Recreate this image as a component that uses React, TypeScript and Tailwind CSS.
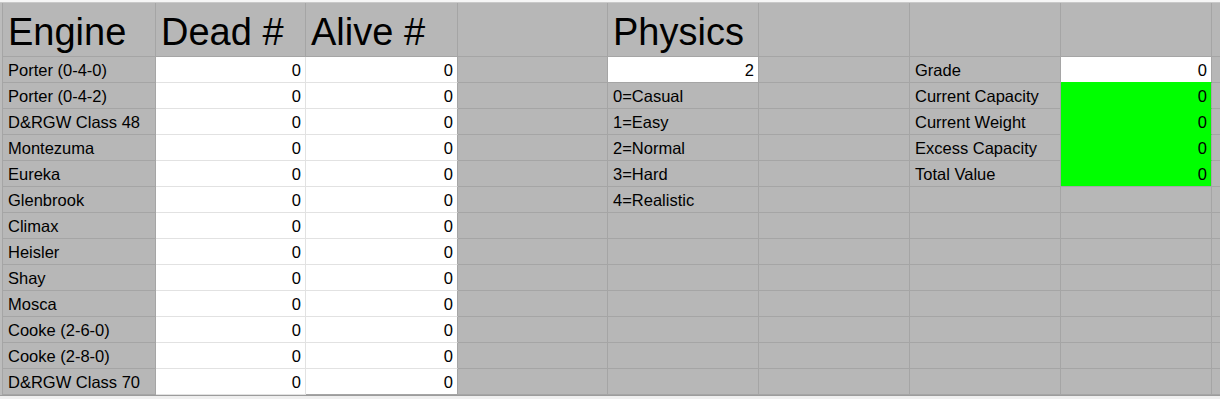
import React from "react";

type Cell = { text?: string; bg: "gray" | "white" | "green"; align?: "left" | "right"; header?: boolean; rb?: "dark" | "light" | "green" | "none"; bb?: "dark" | "light" | "green" };

const engines = [
  "Porter (0-4-0)",
  "Porter (0-4-2)",
  "D&RGW Class 48",
  "Montezuma",
  "Eureka",
  "Glenbrook",
  "Climax",
  "Heisler",
  "Shay",
  "Mosca",
  "Cooke (2-6-0)",
  "Cooke (2-8-0)",
  "D&RGW Class 70",
];

const physics = ["0=Casual", "1=Easy", "2=Normal", "3=Hard", "4=Realistic"];
const stats = ["Grade", "Current Capacity", "Current Weight", "Excess Capacity", "Total Value"];

function bgClass(bg: Cell["bg"]) {
  if (bg === "white") return "bg-white";
  if (bg === "green") return "bg-[#00ff00]";
  return "bg-[#b7b7b7]";
}
function rbClass(rb: Cell["rb"]) {
  if (rb === "light") return "border-r border-r-[#e2e2e2]";
  if (rb === "green") return "border-r border-r-[#00ff00]";
  if (rb === "none") return "";
  return "border-r border-r-[#a5a5a5]";
}
function bbClass(bb: Cell["bb"]) {
  if (bb === "light") return "border-b border-b-[#e2e2e2]";
  if (bb === "green") return "border-b border-b-[#00ff00]";
  return "border-b border-b-[#a5a5a5]";
}

function CellView({ c }: { c: Cell }) {
  return (
    <div
      className={`flex items-end overflow-hidden whitespace-nowrap ${bgClass(c.bg)} ${rbClass(c.rb)} ${bbClass(c.bb)} ${
        c.align === "right" ? "justify-end pr-[4px]" : "justify-start pl-[5px]"
      } ${c.header ? "text-[38px] leading-[43px] pb-[2px] pl-[4px]" : "text-[16.5px] leading-[18px] pb-[3px]"}`}
    >
      {c.text}
    </div>
  );
}

export default function App() {
  const rows: Cell[][] = [];
  rows.push([
    { text: "Engine", bg: "gray", header: true },
    { text: "Dead #", bg: "gray", header: true },
    { text: "Alive #", bg: "gray", header: true },
    { bg: "gray", header: true },
    { text: "Physics", bg: "gray", header: true },
    { bg: "gray", header: true },
    { bg: "gray", header: true },
    { bg: "gray", header: true },
    { bg: "gray", header: true, rb: "none" },
  ]);
  engines.forEach((name, i) => {
    const row: Cell[] = [];
    row.push({ text: name, bg: "gray" });
    row.push({ text: "0", bg: "white", align: "right", rb: "light", bb: "light" });
    row.push({ text: "0", bg: "white", align: "right", rb: "dark", bb: i === engines.length - 1 ? "dark" : "light" });
    row.push({ bg: "gray" });
    if (i === 0) row.push({ text: "2", bg: "white", align: "right", bb: "dark" });
    else if (i - 1 < physics.length) row.push({ text: physics[i - 1], bg: "gray" });
    else row.push({ bg: "gray" });
    row.push({ bg: "gray" });
    if (i < stats.length) row.push({ text: stats[i], bg: "gray" });
    else row.push({ bg: "gray" });
    if (i === 0) row.push({ text: "0", bg: "white", align: "right", bb: "green" });
    else if (i < stats.length) row.push({ text: "0", bg: "green", align: "right", bb: i === stats.length - 1 ? "dark" : "green" });
    else row.push({ bg: "gray" });
    row.push({ bg: "gray", rb: "none" });
    rows.push(row);
  });

  return (
    <div className="w-[1220px] h-[399px] overflow-hidden bg-[#b7b7b7] text-black font-['Liberation_Sans',Arial,sans-serif]">
      <div className="h-[3px] bg-[#f6f6f6] border-b border-b-[#c9c9c9]" />
      <div className="flex">
        <div className="w-[3px] bg-[#bcbcbc] border-r border-r-[#a5a5a5]" />
        <div className="grid grid-cols-[153px_150px_152px_150px_151px_151px_151px_151px_8px] grid-rows-[54px_repeat(13,26px)]">
          {rows.map((r, ri) => r.map((c, ci) => <CellView key={`${ri}-${ci}`} c={c} />))}
        </div>
      </div>
      <div className="h-[4px] bg-[#efefef] border-t border-t-[#9c9c9c]" />
    </div>
  );
}
